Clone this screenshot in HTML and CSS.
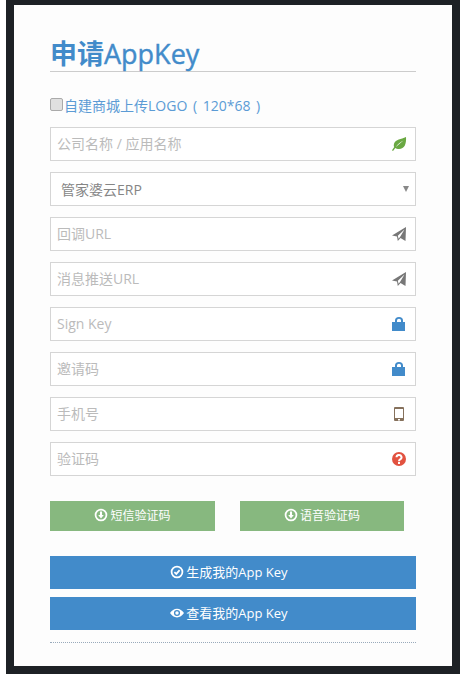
FILE: index.html
```html
<!DOCTYPE html>
<html lang="zh-CN">
<head>
    <meta charset="UTF-8">
    <meta name="viewport" content="width=device-width, initial-scale=1.0">
    <title>申请AppKey</title>
    <link rel="stylesheet" href="styles.css">
</head>
<body>
    <div class="frame">
        <form class="card">
            <h1 class="title"><b>申请</b>AppKey</h1>
            <label class="logo-check">
                <input type="checkbox">
                <span>自建商城上传LOGO ( 120*68 )</span>
            </label>

            <div class="field">
                <input type="text" placeholder="公司名称 / 应用名称">
                <svg class="icon" viewBox="0 0 16 16"><path fill="#6aa842" fill-rule="evenodd" d="M15 1C15.500 8 13.500 13 8 13c-1.500 0-2.800-.4-3.700-1.100L2 15l-1-.7 2.200-3.200C2.600 9.800 2.700 8.500 3.200 7.200 4.700 3.300 10 3.500 15 1zM12.500 4.500C9.500 6 6.500 8 4.800 11.200 7 9 9.500 7 12.500 4.500z"/></svg>
            </div>
            <div class="field">
                <select>
                    <option>管家婆云ERP</option>
                </select>
                <span class="caret"></span>
            </div>
            <div class="field">
                <input type="text" placeholder="回调URL">
                <svg class="icon" viewBox="0 0 16 16"><path fill="#777" d="M15 1 14.500 15 9.500 12 6.800 15 6 10.500 1 9.500zM13.500 3.500 6.800 9.800 7.600 12.800 9 11z"/></svg>
            </div>
            <div class="field">
                <input type="text" placeholder="消息推送URL">
                <svg class="icon" viewBox="0 0 16 16"><path fill="#777" d="M15 1 14.500 15 9.500 12 6.800 15 6 10.500 1 9.500zM13.500 3.500 6.800 9.800 7.600 12.800 9 11z"/></svg>
            </div>
            <div class="field">
                <input type="text" placeholder="Sign Key">
                <svg class="icon" viewBox="0 0 16 16"><path fill="#428bca" fill-rule="evenodd" d="M1 6h3V4.500a4 3.500 0 0 1 8 0V6h2v9H1zM6 6h4V4.500a2 1.800 0 0 0-4 0z"/></svg>
            </div>
            <div class="field">
                <input type="text" placeholder="邀请码">
                <svg class="icon" viewBox="0 0 16 16"><path fill="#428bca" fill-rule="evenodd" d="M1 6h3V4.500a4 3.500 0 0 1 8 0V6h2v9H1zM6 6h4V4.500a2 1.800 0 0 0-4 0z"/></svg>
            </div>
            <div class="field">
                <input type="text" placeholder="手机号">
                <svg class="icon" viewBox="0 0 16 16"><path fill="#86715c" fill-rule="evenodd" d="M4 1h8a1 1 0 0 1 1 1v12a1 1 0 0 1-1 1H4a1 1 0 0 1-1-1V2a1 1 0 0 1 1-1zM4 3v9h8V3zM7 13v1.500h2V13z"/></svg>
            </div>
            <div class="field">
                <input type="text" placeholder="验证码">
                <svg class="icon" viewBox="0 0 16 16"><circle cx="8" cy="8" r="7" fill="#e25240"/><path fill="none" stroke="#fff" stroke-width="2" d="M5.500 6.200a2.500 2.300 0 1 1 3.600 2.100C8.300 8.800 8 9.200 8 10.200"/><rect x="7" y="11" width="2" height="2" fill="#fff"/></svg>
            </div>

            <div class="code-row">
                <button type="button" class="btn btn-green">
                    <svg class="btn-icon" viewBox="0 0 16 16"><circle cx="8" cy="8" r="6.200" fill="none" stroke="#fff" stroke-width="2"/><path fill="#fff" d="M6.800 4h2.400v4h2L8 12 4.800 8h2z"/></svg>
                    短信验证码
                </button>
                <button type="button" class="btn btn-green">
                    <svg class="btn-icon" viewBox="0 0 16 16"><circle cx="8" cy="8" r="6.200" fill="none" stroke="#fff" stroke-width="2"/><path fill="#fff" d="M6.800 4h2.400v4h2L8 12 4.800 8h2z"/></svg>
                    语音验证码
                </button>
            </div>

            <button type="button" class="btn btn-blue btn-generate">
                <svg class="btn-icon" viewBox="0 0 16 16"><circle cx="8" cy="8" r="6.200" fill="none" stroke="#fff" stroke-width="2"/><path fill="none" stroke="#fff" stroke-width="2" d="M5 8.200 7.200 10.200 11 5.800"/></svg>
                生成我的App Key
            </button>
            <button type="button" class="btn btn-blue btn-view">
                <svg class="btn-icon" viewBox="0 0 16 16"><path fill="#fff" fill-rule="evenodd" d="M0 8c2-3.200 4.800-5 8-5s6 1.800 8 5c-2 3.200-4.800 5-8 5S2 11.200 0 8zm8-3.500a3.500 3.500 0 1 0 0 7 3.500 3.500 0 0 0 0-7z"/><circle cx="8" cy="8" r="2" fill="#fff"/></svg>
                查看我的App Key
            </button>
            <div class="dots"></div>
        </form>
    </div>
</body>
</html>
```

FILE: styles.css
```css
:root {
    --dark: #1d2125;
    --blue: #428bca;
    --green: #87b87f;
    --line: #d5d5d5;
}
* {
    box-sizing: border-box;
}
body {
    margin: 0;
    padding: 0 7px 2px 6px;
    background: white;
    font-family: "Open Sans", "Noto Sans CJK SC", sans-serif;
    font-size: 14px;
    color: #393939;
}
.frame {
    background-color: var(--dark);
    padding: 5px 8px 8px;
}
.card {
    background-color: #fdfdfd;
    height: 661px;
    padding: 32px 36px 0;
}
.title {
    margin: 0;
    height: 34px;
    line-height: 34px;
    font-size: 27px;
    font-weight: 400;
    -webkit-text-stroke: 0.4px var(--blue);
    color: var(--blue);
    border-bottom: 1px solid #ccc;
    box-sizing: content-box;
}
.title b {
    font-weight: 700;
    -webkit-text-stroke: 0;
}
.logo-check {
    display: flex;
    align-items: center;
    gap: 1px;
    height: 20px;
    margin: 23px 0 12px;
    color: #5b9bd5;
    word-spacing: 2px;
}
.logo-check input {
    width: 13px;
    height: 13px;
    margin: 0 0 2px;
    background-color: #e0e0e0;
    border: 1px solid #aaa;
    border-radius: 2px;
    appearance: none;
}
.field {
    position: relative;
    height: 34px;
    margin-bottom: 11px;
}
.field input,
.field select {
    display: block;
    width: 100%;
    height: 34px;
    padding: 0 6px;
    background: white;
    border: 1px solid var(--line);
    border-radius: 0;
    font: inherit;
    color: #858585;
    outline: none;
    appearance: none;
}
.field input {
    padding-bottom: 2px;
}
.field select {
    padding-left: 10px;
}
.field input::placeholder {
    color: #bbb;
    opacity: 1;
}
.icon {
    position: absolute;
    top: 9px;
    right: 9px;
    width: 16px;
    height: 16px;
}
.caret {
    position: absolute;
    top: 14px;
    right: 7px;
    border: 3px solid transparent;
    border-top: 6px solid #888;
    border-bottom: 0;
}
.btn {
    display: flex;
    justify-content: center;
    align-items: center;
    gap: 2px;
    border: none;
    color: white;
    font: inherit;
    padding: 0 0 2px;
    cursor: pointer;
}
.btn-icon {
    width: 14px;
    height: 14px;
}
.btn-green {
    background-color: var(--green);
    height: 30px;
    font-size: 12px;
}
.btn-blue {
    background-color: var(--blue);
    width: 100%;
    height: 33px;
    padding-right: 8px;
    font-size: 13px;
}
.code-row {
    display: grid;
    grid-template-columns: 165px 164px;
    column-gap: 25px;
    margin-top: 25px;
}
.btn-generate {
    margin-top: 25px;
}
.btn-view {
    margin-top: 8px;
}
.dots {
    margin-top: 12px;
    border-top: 1px dotted #9ab;
}
```
